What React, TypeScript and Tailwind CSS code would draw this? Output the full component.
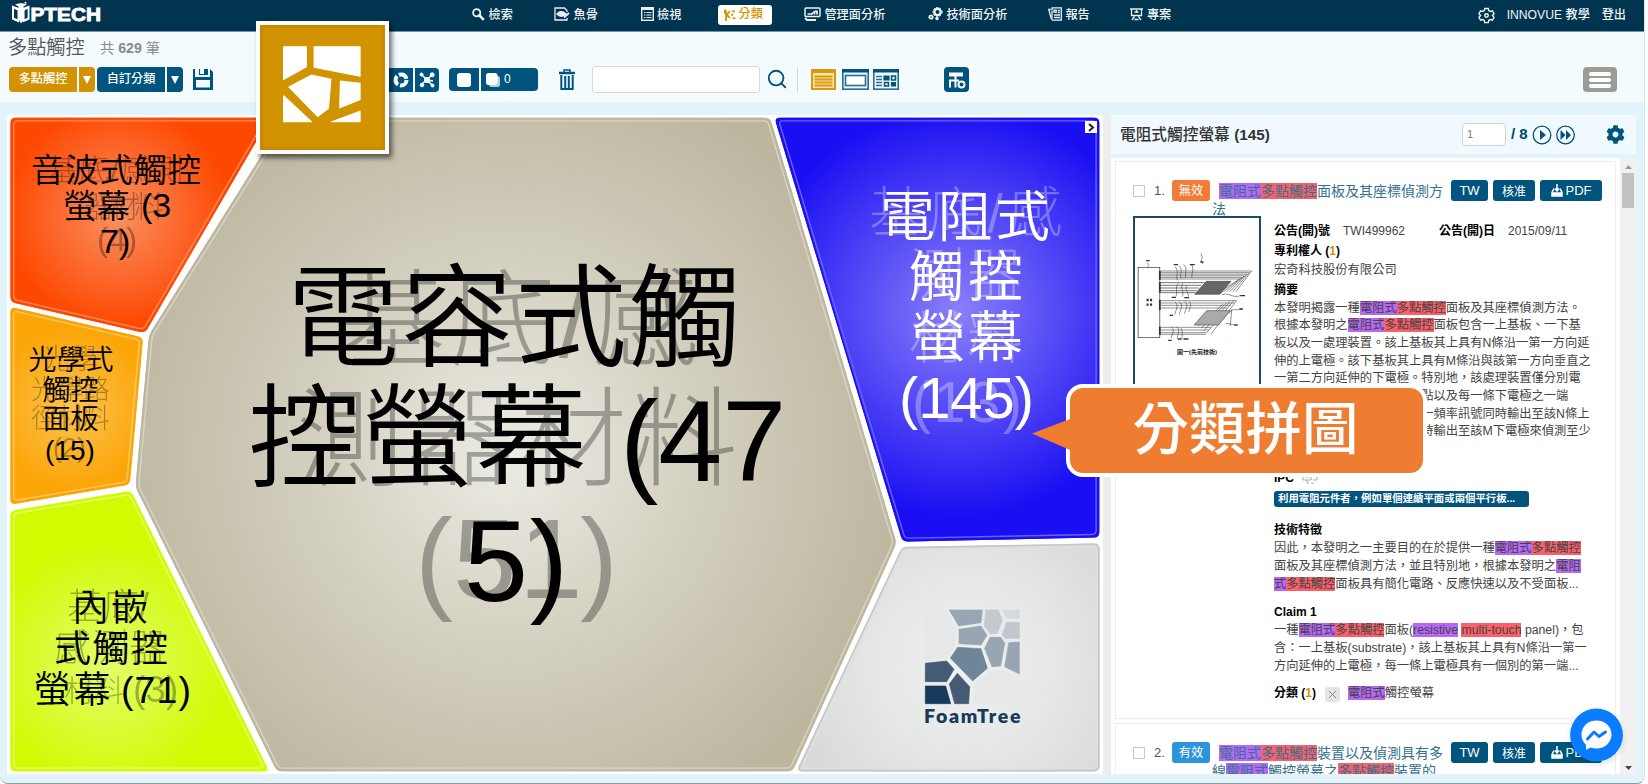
import React from "react";
import { FaCog } from "react-icons/fa";
import { LuSearch } from "react-icons/lu";

type Pt = [number, number];

const FONT = "font-['Liberation_Sans','Noto_Sans_CJK_TC',sans-serif]";

/* ---------- geometry helpers ---------- */

function rounded(pts: Pt[], r: number): string {
  const n = pts.length;
  let d = "";
  pts.forEach((p, i) => {
    const a = pts[(i + n - 1) % n];
    const b = pts[(i + 1) % n];
    const la = Math.hypot(a[0] - p[0], a[1] - p[1]);
    const lb = Math.hypot(b[0] - p[0], b[1] - p[1]);
    const s = [p[0] + ((a[0] - p[0]) * r) / la, p[1] + ((a[1] - p[1]) * r) / la];
    const e = [p[0] + ((b[0] - p[0]) * r) / lb, p[1] + ((b[1] - p[1]) * r) / lb];
    d += `${i ? "L" : "M"}${s[0]} ${s[1]}Q${p[0]} ${p[1]} ${e[0]} ${e[1]}`;
  });
  return d + "Z";
}

function inset(pts: Pt[], k: number): Pt[] {
  const n = pts.length;
  const lines = pts.map((p, i) => {
    const q = pts[(i + 1) % n];
    const l = Math.hypot(q[0] - p[0], q[1] - p[1]);
    const dx = (q[0] - p[0]) / l;
    const dy = (q[1] - p[1]) / l;
    return { x: p[0] - dy * k, y: p[1] + dx * k, dx, dy };
  });
  return lines.map((b, i) => {
    const a = lines[(i + n - 1) % n];
    const det = a.dx * b.dy - a.dy * b.dx;
    const t = ((b.x - a.x) * b.dy - (b.y - a.y) * b.dx) / det;
    return [a.x + a.dx * t, a.y + a.dy * t] as Pt;
  });
}

/* ---------- foam tree ---------- */

interface Cell {
  id: string;
  pts: Pt[];
  c: Pt;
  r: number;
  inner: string;
  mid: string;
  outer: string;
  line: string;
}

const cells: Cell[] = [
  { id: "red", pts: [[10.5, 117.7], [270, 117.7], [145, 333], [10.5, 302]], c: [118, 215], r: 112, inner: "#fb905f", mid: "#fc6c33", outer: "#fd4800", line: "#ff8a5c" },
  { id: "amber", pts: [[10.5, 307], [143, 337.5], [129.7, 484.5], [10.5, 504.5]], c: [72, 408], r: 82, inner: "#fdc34d", mid: "#fcb42b", outer: "#fba506", line: "#ffc862" },
  { id: "lime", pts: [[10.5, 511], [131, 491], [269, 771.3], [10.5, 771.3]], c: [108, 665], r: 125, inner: "#e3fd6a", mid: "#dafc38", outer: "#d0fb00", line: "#e6ff70" },
  { id: "sand", pts: [[285, 117.7], [770, 117.7], [896.5, 543], [792.5, 771.3], [277, 771.3], [135.5, 487], [149, 335]], c: [507, 455], r: 400, inner: "#ecebe4", mid: "#d3cfbf", outer: "#bdb69f", line: "#d8d4c4" },
  { id: "blue", pts: [[774.5, 117.7], [1099.3, 117.7], [1099.3, 537.5], [902.5, 541.5]], c: [958, 312], r: 205, inner: "#8a80fa", mid: "#5348f5", outer: "#190ff2", line: "#6a62f8" },
  { id: "mist", pts: [[902, 547], [1099.5, 543.5], [1099.5, 771.3], [796.5, 771.3]], c: [965, 665], r: 175, inner: "#eff1f1", mid: "#e6e8e8", outer: "#d8dada", line: "#dfe1e1" },
];

type Label = [string, number, number, number, number?];

const ghosts: Label[] = [
  ["基底/感測", 47, 180, 30, 136],
  ["器材料", 84, 217, 30, 80],
  ["(4)", 97, 251, 33],
  ["光學", 42, 369, 28],
  ["光學路", 31, 399, 27, 79],
  ["徑材料", 31, 428, 27, 79],
  ["(2)", 53, 457, 27],
  ["基底/", 67, 619, 36],
  ["感測器", 54, 661, 37, 112],
  ["材料", 64, 701, 30],
  ["(3)", 133, 702, 37],
  ["基底/感", 340, 357, 106, 358],
  ["測器材料", 296, 477, 108, 442],
  ["(5", 415, 598, 114],
  ["1", 519, 598, 114],
  [")", 580, 598, 114],
];

const blueGhosts: Label[] = [
  ["基底/感", 869, 232, 54, 193],
  ["測器", 909, 294, 56, 114],
  ["材料", 909, 358, 56, 114],
  ["(13)", 912, 422, 57, 110],
];

const labels: Label[] = [
  ["音波式觸控", 31, 182, 33.5, 170],
  ["螢幕", 63, 218, 33.5, 67],
  ["(3", 141, 217, 34],
  ["7)", 100, 253, 34],
  ["光學式", 28.5, 369.5, 28, 85],
  ["觸控", 42.5, 400, 28],
  ["面板", 42.5, 429, 28],
  ["(15)", 45, 459.5, 28],
  ["內嵌", 72, 620.5, 37, 76],
  ["式觸控", 54, 662, 37, 114],
  ["螢幕", 33.5, 702.5, 37, 77],
  ["(71)", 121, 703, 37.5, 70],
  ["電容式觸", 287, 358, 112, 454],
  ["控螢幕", 248, 477.5, 112, 339],
  ["(47", 620, 480.5, 115],
  ["5)", 464, 601, 115, 104],
];

const blueLabels: Label[] = [
  ["電阻式", 880, 236, 55, 170],
  ["觸控", 909, 296, 55, 114],
  ["螢幕", 911, 356, 55, 112],
  ["(145)", 899, 417.5, 58, 135],
];

function Labels({ items, fill, opacity = 1 }: { items: Label[]; fill: string; opacity?: number }) {
  return (
    <g fill={fill} opacity={opacity}>
      {items.map(([t, x, y, s, len], i) => (
        <text key={i} x={x} y={y} fontSize={s} textLength={len} lengthAdjust="spacing">
          {t}
        </text>
      ))}
    </g>
  );
}

function FoamTreeLogo() {
  const tiles: [string, string][] = [
    ["#e6e8e9", "450,330 498,330 525,385 525,440 500,475 436,482 436,345"],
    ["#98a5b3", "508,330 607,330 603,368 536,378"],
    ["#c3c9cf", "617,330 655,330 667,360 652,400 632,402 613,378"],
    ["#d6dadc", "667,330 718,330 718,355 680,355"],
    ["#c0c7ce", "680,367 718,367 718,415 675,415 666,405"],
    ["#98a5b3", "537,388 603,378 621,406 603,435 537,431"],
    ["#98a5b3", "630,412 662,412 674,430 662,498 636,500 614,445"],
    ["#98a5b3", "686,428 718,426 718,522 674,500"],
    ["#6f8598", "533,442 603,446 622,505 578,543 511,474"],
    ["#455a75", "436,490 500,483 522,508 500,545 436,545"],
    ["#455a75", "532,520 569,560 566,611 524,611 508,552"],
    ["#17395a", "436,558 497,558 512,611 436,611"],
    ["#e6e8e9", "585,545 635,512 670,514 718,537 718,598 705,611 579,611"],
  ];
  return (
    <g transform="translate(780 500) scale(0.33333)">
      {tiles.map(([f, p], i) => (
        <polygon key={i} points={p} fill={f} stroke={f} strokeWidth="2" strokeLinejoin="round" />
      ))}
    </g>
  );
}

function FoamTree() {
  return (
    <svg viewBox="7 115 1096 659" className="block h-full w-full">
      <defs>
        {cells.map((c) => (
          <radialGradient key={c.id} id={c.id} gradientUnits="userSpaceOnUse" cx={c.c[0]} cy={c.c[1]} r={c.r}>
            <stop offset="0" stopColor={c.inner} />
            <stop offset="0.5" stopColor={c.mid} />
            <stop offset="1" stopColor={c.outer} />
          </radialGradient>
        ))}
      </defs>
      {cells.map((c) => (
        <g key={c.id}>
          <path d={rounded(c.pts, 5)} fill={`url(#${c.id})`} />
          <path d={rounded(inset(c.pts, 0.7), 5)} fill="none" stroke={c.outer} strokeWidth="1.4" />
          <path d={rounded(inset(c.pts, 3.2), 4)} fill="none" stroke={c.line} strokeWidth="1.4" />
          {c.id === "mist" && <path d={rounded(inset(c.pts, 0.7), 5)} fill="none" stroke="#c6c8c8" strokeWidth="1.6" />}
        </g>
      ))}
      <g fontWeight="300">
        <Labels items={ghosts} fill="#000" opacity={0.3} />
        <Labels items={blueGhosts} fill="#fff" opacity={0.3} />
      </g>
      <g fontWeight="350">
        <Labels items={labels} fill="#000" />
        <Labels items={blueLabels} fill="#fff" />
      </g>
      <FoamTreeLogo />
      <text x="924" y="722.5" textLength="96.5" fontSize="19.5" fontWeight="800" fill="#17395a" fontFamily="Lato">
        FoamTree
      </text>
    </svg>
  );
}

/* ---------- header ---------- */

function Logo() {
  return (
    <svg width="92" height="24" viewBox="11 1 92 24">
      <path d="M12 5.500l7 2.500v14.500l-7-3z" fill="#fff" />
      <path d="M14 9l3.500 1.200v9l-3.500-1.500z" fill="#01344e" />
      <path d="M29.500 5.500l-7 2.500v14.500l7-3z" fill="#fff" />
      <path d="M27.600 9l-3 1.200v9l3-1.500z" fill="#01344e" />
      <path d="M15 4.500l4.500-1.300h3l4.500 1.300-3.500 2v13l-2.500 4-2.500-4v-13z" fill="#fff" />
      <circle cx="25.500" cy="2.700" r="1" fill="#fff" />
      <text x="30.500" y="21" fontSize="18.500" fontWeight="bold" fill="#fff" stroke="#fff" strokeWidth=".9" textLength="70.500" lengthAdjust="spacingAndGlyphs">
        PTECH
      </text>
    </svg>
  );
}

const KeySearchIcon = () => (
  <svg width="13" height="13" viewBox="0 0 13 13" fill="none" stroke="#f0f4f7">
    <circle cx="4.700" cy="4.700" r="3.600" strokeWidth="1.800" />
    <path d="M7.500 7.500l4.300 4.300" strokeWidth="2.600" />
  </svg>
);
const FishIcon = () => (
  <svg width="16" height="14" viewBox="0 0 16 14" fill="none" stroke="#e9f0f4" strokeWidth="1.300">
    <path d="M13 5V3.500L10.500 1H1v12h12v-2" />
    <path d="M3 7c2.500-3 6-3 9 0-3 3-6.500 3-9 0z" fill="#e9f0f4" />
    <path d="M10 10.500l5-4.500" strokeWidth="1.800" />
  </svg>
);
const ListIcon = () => (
  <svg width="13" height="14" viewBox="0 0 13 14" fill="none" stroke="#e9f0f4" strokeWidth="1.400">
    <rect x=".7" y=".7" width="11.600" height="12.600" />
    <path d="M1 2h11" strokeWidth="2" />
    <path d="M3 5.500h1.500M5.500 5.500h5M3 8h1.500M5.500 8h5M3 10.500h1.500M5.500 10.500h5" strokeWidth="1.200" />
  </svg>
);
const SortIcon = () => (
  <svg width="12" height="12" viewBox="0 0 12 12" fill="#d39200">
    <path d="M0 1l2-1 1 4L5.500 1.500 6.500 3 4 5.500l2.500 3-1 1.200L3 7.500V12H1.200V4.500H0z" />
    <rect x="8" y="1.500" width="3" height="1.600" />
    <rect x="7" y="4.800" width="2.200" height="1.800" />
    <rect x="8.500" y="8.500" width="3" height="1.600" />
  </svg>
);
const MonitorIcon = () => (
  <svg width="17" height="14" viewBox="0 0 17 14" fill="none" stroke="#e9f0f4" strokeWidth="1.500">
    <rect x="1" y="1" width="15" height="8.500" rx="1" />
    <path d="M3.500 7h4l3-2.500 3-.5" />
    <path d="M8 7.500V6M10.500 7.500V5M13 7.500V4" strokeWidth="1.800" />
    <path d="M1 11l2 2h9" strokeWidth="1.800" />
  </svg>
);
const GearsIcon = () => (
  <svg width="15" height="14" viewBox="0 0 15 14" fill="none" stroke="#f0f4f7">
    <circle cx="9.500" cy="5" r="3.200" strokeWidth="2.400" />
    <circle cx="9.500" cy="5" r="4.600" strokeWidth="1" strokeDasharray="1.800 1.500" />
    <circle cx="3" cy="10" r="1.700" strokeWidth="1.800" />
    <circle cx="9" cy="11.500" r="1" strokeWidth="1.600" />
  </svg>
);
const ReportIcon = () => (
  <svg width="14" height="14" viewBox="0 0 14 14" fill="none" stroke="#e9f0f4" strokeWidth="1.300">
    <path d="M4 3.500V.8h9.300v12.400H4.500L3 11 .8 2.500h2" />
    <path d="M4 4v7.500" />
    <rect x="6" y="3.200" width="2.200" height="2" />
    <path d="M9.800 3.500h2M9.800 5.500h2M6 8h6M6 10.500h6" />
  </svg>
);
const CaseIcon = () => (
  <svg width="13" height="13" viewBox="0 0 13 13" fill="none" stroke="#e9f0f4" strokeWidth="1.300">
    <path d="M0 1h13M1.500 1.500v6h10v-6M1.500 7.500h10M6.500 2v3M4.500 4h4M2 12l2.500-3.500M11 12L8.500 8.500M4.500 11.500h4" />
  </svg>
);

function NavItem({ w, icon, text, active }: { w: string; icon: React.ReactNode; text: string; active?: boolean }) {
  return (
    <div className={`${w} flex shrink-0 items-center`}>
      {active ? (
        <div className="flex h-5 w-[54px] items-center gap-[3px] rounded-[3px] bg-white pl-1.5 text-[#d39200]">
          {icon}
          <span className="whitespace-nowrap">{text}</span>
        </div>
      ) : (
        <div className="flex items-center gap-[3.500px]">
          {icon}
          <span className="pt-0.5 whitespace-nowrap">{text}</span>
        </div>
      )}
    </div>
  );
}

function Header() {
  return (
    <header className="flex h-8 items-center border-b border-[#6f96a8] bg-[#01344e] text-[12.200px] font-medium text-[#f0f4f7]">
      <div className="w-[472px] shrink-0 pb-1.5 pl-[11px]">
        <Logo />
      </div>
      <nav className="flex h-full flex-1 items-center pb-0.5">
        <NavItem w="w-[82px]" icon={<KeySearchIcon />} text="檢索" />
        <NavItem w="w-[86.600px]" icon={<FishIcon />} text="魚骨" />
        <NavItem w="w-[77px]" icon={<ListIcon />} text="檢視" />
        <NavItem w="w-[86.300px]" icon={<SortIcon />} text="分類" active />
        <NavItem w="w-[124px]" icon={<MonitorIcon />} text="管理面分析" />
        <NavItem w="w-[120px]" icon={<GearsIcon />} text="技術面分析" />
        <NavItem w="w-[82.500px]" icon={<ReportIcon />} text="報告" />
        <NavItem w="w-[60px]" icon={<CaseIcon />} text="專案" />
      </nav>
      <div className="flex items-center pr-[18px]">
        <svg width="17" height="17" viewBox="0 0 24 24" fill="none" stroke="#f0f4f7" strokeWidth="2">
          <path d="M9.500 2h5l.6 3 2.300 1.300 2.900-1 2.400 4.200L20.400 12l2.300 2.500-2.400 4.200-2.900-1-2.300 1.300-.6 3h-5l-.6-3-2.300-1.300-2.900 1-2.400-4.200L3.600 12 1.300 9.500l2.400-4.200 2.900 1L8.900 5z" />
          <circle cx="12" cy="12" r="2.500" />
        </svg>
        <span className="ml-3 w-[95px] whitespace-nowrap">INNOVUE 教學</span>
        <span>登出</span>
      </div>
    </header>
  );
}

/* ---------- toolbar ---------- */

function SplitButton({ text, gold }: { text: string; gold?: boolean }) {
  const bg = gold ? "bg-[#d39200]" : "bg-[#00547d]";
  return (
    <div className="flex h-[25px] gap-0.5 text-[12.200px] font-medium text-white">
      <div className={`${bg} flex w-[68px] shrink-0 items-center justify-center rounded-l`}>{text}</div>
      <div className={`${bg} flex w-4 shrink-0 items-center justify-center rounded-r`}>
        <svg width="8" height="8" viewBox="0 0 8 8">
          <path d="M0 0h8L4 8z" fill="#fff" />
        </svg>
      </div>
    </div>
  );
}

function Toolbar() {
  return (
    <div className="flex h-[25px] items-center">
      <div className="w-[95px] shrink-0 pl-[9px]">
        <SplitButton text="多點觸控" gold />
      </div>
      <div className="ml-[2px] w-[86px] shrink-0">
        <SplitButton text="自訂分類" />
      </div>
      <svg className="ml-[10px] shrink-0" width="20" height="21" viewBox="0 0 20 21">
        <path d="M0 0h2v8h15V0l3 3v18H0z" fill="#00547d" />
        <rect x="6" y="0" width="9" height="6" fill="#00547d" />
        <rect x="7" y="0" width="4" height="5" fill="#f3fbff" />
        <rect x="3" y="11" width="14" height="7.500" fill="#f3fbff" />
      </svg>
      <div className="ml-[173px] flex shrink-0 gap-0.5 text-white">
        <div className="flex h-6 w-[27px] items-center justify-end bg-[#00547d] pr-1">
          <svg width="16" height="16" viewBox="0 0 16 16">
            <circle cx="8" cy="8" r="5.500" fill="none" stroke="#fff" strokeWidth="4" strokeDasharray="9.500 2" />
          </svg>
        </div>
        <div className="flex h-6 w-6 items-center justify-center rounded-r bg-[#00547d]">
          <svg width="16" height="16" viewBox="0 0 16 16" fill="#fff" stroke="#fff">
            <path d="M2.500 2.500l11 11M13 3L3 12M8 8l6 1" strokeWidth="1.600" />
            <circle cx="8" cy="8" r="2.600" />
            <circle cx="2.500" cy="2.500" r="1.500" />
            <circle cx="13.200" cy="2.800" r="2" />
            <circle cx="3" cy="13" r="1.800" />
            <circle cx="13.500" cy="13.500" r="1.500" />
          </svg>
        </div>
      </div>
      <div className="ml-[10px] flex shrink-0 gap-0.5 text-white">
        <div className="flex h-[23px] w-[30px] items-center justify-center rounded-l-sm bg-[#00547d]">
          <div className="h-[14px] w-[14px] rounded-[3px] bg-white" />
        </div>
        <div className="flex h-[23px] w-[57px] items-center rounded-r-sm bg-[#00547d] pl-1">
          <svg width="16" height="16" viewBox="0 0 16 16">
            <rect x="4" y="4" width="11" height="11" rx="2.500" fill="#b9cfdb" />
            <rect x="1" y="1" width="11.500" height="12" rx="2.500" fill="#fff" />
          </svg>
          <span className="ml-[3px] pb-0.5 text-xs">0</span>
        </div>
      </div>
      <svg className="ml-[21px] shrink-0" width="16" height="21" viewBox="0 0 16 21" fill="none" stroke="#00547d">
        <path d="M0 4h16" strokeWidth="2.500" />
        <path d="M5 3V1h6v2" strokeWidth="1.500" />
        <path d="M2.300 6v14h11.400V6M6.200 7v12M9.800 7v12" strokeWidth="2" />
      </svg>
      <div className="ml-[17px] h-[27px] w-[168px] shrink-0 rounded-[3px] border border-[#d6dadc] bg-white" />
      <LuSearch className="ml-[5px] shrink-0 pb-0.5 text-[#00547d]" size={24} strokeWidth={2} />
      <div className="ml-[8px] h-[26px] w-px shrink-0 bg-[#d5dadd]" />
      <svg className="ml-[13px] shrink-0" width="25" height="21" viewBox="0 0 25 21">
        <rect x="1" y="1" width="23" height="19" fill="#f7e3b3" stroke="#d99a0c" strokeWidth="2" />
        <rect x="0" y="0" width="25" height="4" fill="#d99a0c" />
        <path d="M3.500 7.500h18M3.500 10.500h18M3.500 13.500h18M3.500 16.500h18" stroke="#d99a0c" strokeWidth="1.800" />
      </svg>
      <svg className="ml-[6px] shrink-0" width="27" height="21" viewBox="0 0 27 21">
        <rect x=".8" y=".8" width="25.400" height="19.400" fill="#e9f5fa" stroke="#2a6d90" strokeWidth="1.600" />
        <rect x="0" y="0" width="27" height="3.500" fill="#00547d" />
        <rect x="3.500" y="6.500" width="20" height="10" fill="#fff" stroke="#2a6d90" strokeWidth="1.600" />
      </svg>
      <svg className="ml-[4px] shrink-0" width="26" height="21" viewBox="0 0 26 21">
        <rect x=".8" y=".8" width="24.400" height="19.400" fill="#f3fbff" stroke="#2a6d90" strokeWidth="1.600" />
        <rect x="0" y="0" width="26" height="3.500" fill="#00547d" />
        <path d="M3 7.500h6M3 10.500h6M3 13.500h6M3 16.500h6" stroke="#2a6d90" strokeWidth="1.300" />
        <path d="M11 7h5v4h-5zM18.500 13.500h4v3.500h-4z" fill="#00547d" stroke="#00547d" strokeWidth="1.200" />
        <path d="M18.500 7h4v4h-4zM11.500 13.500h4v3.500h-4z" fill="#d4e6ef" stroke="#00547d" strokeWidth="1.500" />
      </svg>
      <svg className="ml-[45px] shrink-0" width="25" height="25" viewBox="0 0 25 25">
        <rect width="25" height="25" rx="4" fill="#00547d" />
        <path d="M5 5.500h14v4H5z" fill="#fff" />
        <path d="M11.500 9v4M5 13.500h10M6 13v7.500M11.500 13v7.500" fill="none" stroke="#fff" strokeWidth="2" />
        <circle cx="17.500" cy="17.500" r="3" fill="none" stroke="#fff" strokeWidth="2" />
      </svg>
      <div className="mr-[27px] ml-auto flex h-[25px] w-[34px] shrink-0 flex-col items-center justify-center gap-[2px] rounded bg-[#9b9c96]">
        <div className="h-1 w-[22px] rounded-full bg-white" />
        <div className="h-1 w-[22px] rounded-full bg-white" />
        <div className="h-1 w-[22px] rounded-full bg-white" />
      </div>
    </div>
  );
}

/* ---------- result list ---------- */

const V = ({ children }: { children: React.ReactNode }) => <mark className="bg-[#b768f8] text-inherit">{children}</mark>;
const R = ({ children }: { children: React.ReactNode }) => <mark className="bg-[#fb5f6a] text-inherit">{children}</mark>;
const H = () => (
  <>
    <V>電阻式</V>
    <R>多點觸控</R>
  </>
);

const PdfIcon = () => (
  <svg width="12" height="13" viewBox="0 0 12 13" fill="none" stroke="#fff" strokeWidth="1.500">
    <path d="M3 4.500L1 8.500V12h10V8.500L9 4.500" />
    <path d="M6 0v6M4 4.500L6 7l2-2.500" />
    <path d="M1 10h10" strokeWidth="3.500" />
  </svg>
);

function RowHead({ no, tag, tagBg, line1, line2 }: { no: string; tag: string; tagBg: string; line1: React.ReactNode; line2: React.ReactNode }) {
  return (
    <div>
      <div className="flex h-[21px] items-center">
        <div className="ml-[17px] h-3 w-3 shrink-0 border border-[#c5c9cb] bg-white" />
        <span className="ml-[9px] w-[18px] shrink-0 text-[13px] text-[#555]">{no}</span>
        <span className={`${tagBg} flex h-[21px] w-[38px] shrink-0 items-center justify-center rounded-[3px] pt-0.5 text-[12.200px] text-white`}>{tag}</span>
        <span className="ml-[9px] w-[232px] shrink-0 pt-0.5 text-[14px] leading-[15px] whitespace-nowrap text-[#35718f]">{line1}</span>
        <span className="flex h-[21px] w-[37px] shrink-0 items-center justify-center rounded-[3px] bg-[#00547d] text-[13px] text-white">TW</span>
        <span className="ml-[5px] flex h-[21px] w-[42px] shrink-0 items-center justify-center rounded-[3px] bg-[#00547d] pt-0.5 text-xs text-white">核准</span>
        <span className="ml-[5px] flex h-[21px] w-[62px] shrink-0 items-center justify-center gap-[3px] rounded-[3px] bg-[#00547d] text-[13px] text-white">
          <PdfIcon />
          PDF
        </span>
      </div>
      <div className="h-[14px] pt-[1px] pl-[96px] text-[14px] leading-[15px] whitespace-nowrap text-[#35718f]">{line2}</div>
    </div>
  );
}

function Bundle({ y, h, x2, n }: { y: number; h: number; x2: number; n: number }) {
  return (
    <>
      {Array.from({ length: n }, (_, i) => (
        <path key={i} d={`M172 ${y + (h * i) / (n - 1)}H${x2 - i * 7}L${x2 - 45 - i * 9} ${y + 62}`} />
      ))}
    </>
  );
}

function Figure() {
  return (
    <div className="mt-px h-[261px] w-32 shrink-0 border-2 border-[#1d4a60] bg-white">
      <svg width="124" height="150" viewBox="101 324 355 450" preserveAspectRatio="none" fill="none" stroke="#333" strokeWidth="1.600">
        <rect x="110" y="472" width="62" height="211" strokeWidth="2" />
        <Bundle y={483} h={24} x2={435} n={6} />
        <path d="M172 518H300M172 526H290M172 534H284M172 542H278M172 548H274" strokeWidth="2" />
        <path d="M305 514H376L344 553H272z" fill="#666" stroke="#333" />
        <path d="M172 572H392M172 579H385M172 586H376M172 594H366M392 572L318 673M384 572L308 666M374 574L298 662M364 578L290 655M354 582L282 648" />
        <path d="M306 602H374L340 645H270z" fill="#aaa" />
        <path d="M172 652H318M172 660H312M172 668H308M172 673H304" />
        <path d="M172 483V510M172 516V548M172 570V600M172 650V674" strokeWidth="5" />
        <path d="M215 470c15 10 0 34 8 40M226 466c15 10 0 34 8 40M240 464c15 10 0 34 8 40M262 464c10 10 0 24 2 40M226 520c-12 10-2 26-8 40M238 520c-10 14 6 24-2 40M250 528c-10 10 6 20 4 32M215 576c15 10 0 28 0 38M228 576c15 10 0 28 0 38M243 574c15 10 0 28 0 38M256 574c9 10 0 20 0 32M205 650c12 10 2 22 0 34M220 650c12 10 2 22 2 38M232 654c8 10 2 22 4 34" />
        <path d="M290 430l4 14-4 6 5 12M136 458l4 8-3 6M350 554c20-8 30 12 52 3M370 610c14-20 22-5 34-14M360 640l24 4M378 598l-4 50" />
        <path d="M134 570h6M144 570h6M134 584h6M144 584h6" strokeWidth="7" />
        <path d="M133 452h10M212 464h12M258 464h14M288 456h9M206 562h12M242 563h14M402 557h14M200 616h10M400 597h10M385 645h10M196 691h10M224 687h10M240 687h14" strokeWidth="4" />
      </svg>
      <div className="-mt-[20px] text-center text-[6px] leading-[8px] font-bold text-[#222]">圖一(先前技術)</div>
    </div>
  );
}

function Card1() {
  return (
    <article className="h-[558px] shrink-0 overflow-hidden border border-[#ededed] bg-white pt-[18px]">
      <RowHead
        no="1."
        tag="無效"
        tagBg="bg-[#f47b35]"
        line1={
          <>
            <H />
            面板及其座標偵測方
          </>
        }
        line2="法"
      />
      <div className="flex pl-[17px]">
        <Figure />
        <div className="ml-[13px] pt-[2.500px] text-[12.280px] leading-[17.700px] whitespace-nowrap text-[#444]">
          <div className="mt-[5px] flex h-[18px] text-[12px]">
            <b className="w-[69px] text-black">公告(開)號</b>
            <span className="w-[96px]">TWI499962</span>
            <b className="w-[69px] text-black">公告(開)日</b>
            <span>2015/09/11</span>
          </div>
          <div className="mt-[2px] h-[18px] text-[12px] font-bold text-black">
            專利權人 (<span className="text-[#d39200]">1</span>)
          </div>
          <div className="mt-[1.500px] h-[18px]">宏奇科技股份有限公司</div>
          <div className="mt-[1.500px] h-[18px] text-[12px] font-bold text-black">摘要</div>
          <div>
            本發明揭露一種
            <H />
            面板及其座標偵測方法。
          </div>
          <div>
            根據本發明之
            <H />
            面板包含一上基板、一下基
          </div>
          <div>板以及一處理裝置。該上基板其上具有N條沿一第一方向延</div>
          <div>伸的上電極。該下基板其上具有M條沿與該第一方向垂直之</div>
          <div>一第二方向延伸的下電極。特別地，該處理裝置僅分別電</div>
          <div>性連接每一條上電極之一端點以及每一條下電極之一端</div>
          <div>點。該處理裝置可以產生第一頻率訊號同時輸出至該N條上</div>
          <div>電極，並且將相反訊號再同時輸出至該M下電極來偵測至少</div>
          <div className="mt-[28px] flex h-[18px] items-center gap-2 text-xs font-bold text-black">
            IPC
            <svg width="16" height="14" viewBox="0 0 16 14" fill="none" stroke="#aaa">
              <path d="M1 1h8v8H1zM3 4h4M3 6h4M11 2h4v7h-4M5 9v3h2M9 12h3" />
            </svg>
          </div>
          <div className="mt-[4px] flex h-4 w-[255px] items-center overflow-hidden rounded-[3px] bg-[#00547d] pl-1 text-[10.400px] font-bold text-white">
            利用電阻元件者，例如單個連續平面或兩個平行板...
          </div>
          <div className="mt-[15px] h-[18px] text-[12px] font-bold text-black">技術特徵</div>
          <div>
            因此，本發明之一主要目的在於提供一種
            <H />
          </div>
          <div>
            面板及其座標偵測方法，並且特別地，根據本發明之<V>電阻</V>
          </div>
          <div>
            <V>式</V>
            <R>多點觸控</R>
            面板具有簡化電路、反應快速以及不受面板...
          </div>
          <div className="mt-[11px] h-[18px] text-[12px] font-bold text-black">Claim 1</div>
          <div>
            一種
            <H />
            面板(<V>resistive</V> <R>multi-touch</R> panel)，包
          </div>
          <div>含：一上基板(substrate)，該上基板其上具有N條沿一第一</div>
          <div>方向延伸的上電極，每一條上電極具有一個別的第一端...</div>
          <div className="mt-[10px] flex h-[18px] items-center">
            <b className="text-[12px] text-black">
              分類 (<span className="text-[#d39200]">1</span>)
            </b>
            <span className="mr-2 ml-[9px] flex h-[15px] w-[15px] items-center justify-center rounded-[3px] bg-[#e4e4e4]">
              <svg width="9" height="9" viewBox="0 0 9 9" stroke="#888">
                <path d="M1 1l7 7M8 1L1 8" />
              </svg>
            </span>
            <span>
              <V>電阻式</V>觸控螢幕
            </span>
          </div>
        </div>
      </div>
    </article>
  );
}

function ResultPanel() {
  return (
    <section className="flex w-[525px] shrink-0 flex-col">
      <div className="flex h-[39px] shrink-0 items-center bg-[#f0fafe]">
        <h2 className="ml-[9px] w-[342px] text-[15.700px] font-medium text-[#333]">
          電阻式觸控螢幕 <b className="text-[15.300px]">(145)</b>
        </h2>
        <div className="flex h-[23px] w-[44px] items-center rounded-sm border border-[#d0d4d6] bg-white pl-1 text-[11px] text-[#777]">1</div>
        <b className="ml-[5px] w-[21px] text-[15px] whitespace-nowrap text-[#00456a]">/ 8</b>
        <svg width="44" height="20" viewBox="0 0 44 20">
          <circle cx="10" cy="10" r="8.800" fill="#f5fcff" stroke="#00547d" strokeWidth="1.300" />
          <path d="M8 5l6 5-6 5z" fill="#00547d" />
          <circle cx="33.500" cy="10" r="8.800" fill="#f5fcff" stroke="#00547d" strokeWidth="1.300" />
          <path d="M28.500 5l5 5-5 5zM34 5l5 5-5 5z" fill="#00547d" />
        </svg>
        <FaCog className="ml-[30px] text-[#00547d]" size={19} />
      </div>
      <div className="mt-[4px] flex h-[616px] overflow-hidden bg-white">
        <div className="flex w-[505px] shrink-0 flex-col gap-1 pt-[3px] pl-[4px]">
          <Card1 />
          <article className="h-[80px] shrink-0 border border-[#ededed] bg-white pt-[18px]">
            <RowHead
              no="2."
              tag="有效"
              tagBg="bg-[#2d94dc]"
              line1={
                <>
                  <H />
                  裝置以及偵測具有多
                </>
              }
              line2={
                <>
                  線<V>電阻式</V>觸控螢幕之<R>多點觸控</R>裝置的
                </>
              }
            />
          </article>
        </div>
        <div className="ml-auto flex w-4 flex-col items-center bg-[#f1f1f1] pt-[7px] pb-1">
          <svg width="7" height="4" viewBox="0 0 7 4">
            <path d="M0 4h7L3.500 0z" fill="#999" />
          </svg>
          <div className="mt-1 h-[35px] w-3 bg-[#c1c1c1]" />
          <svg className="mt-auto" width="7" height="4" viewBox="0 0 7 4">
            <path d="M0 0h7L3.500 4z" fill="#444" />
          </svg>
        </div>
      </div>
    </section>
  );
}

/* ---------- overlays ---------- */

function BigTile() {
  return (
    <div className="absolute top-[21px] left-[256px] h-[133px] w-[133px] border-4 border-white bg-[#d19300] shadow-[3px_4px_5px_rgba(0,0,0,0.55)]">
      <svg className="h-full w-full" viewBox="741 75 356 373" preserveAspectRatio="none">
        <rect x="745" y="79" width="348" height="365" fill="none" stroke="#c98900" strokeWidth="10" />
        <g fill="#fff" stroke="#fff" strokeWidth="3" strokeLinejoin="round" className="blur-[2px]">
          <path d="M808 140H873V200L808 238zM895 140H1026V228L895 201zM823 260L888 224 943 237 936 324 905 348zM970 242L1026 249V298L968 322zM808 286L888 364H808zM944 364L1026 332V364z" />
        </g>
      </svg>
    </div>
  );
}

function Callout() {
  return (
    <div className="absolute top-[384px] left-[1066px] flex h-[93px] w-[361px] items-center justify-center rounded-[17px] border-4 border-white bg-[#ee7d31]">
      <svg className="absolute top-[31px] -left-[38px]" width="40" height="31" viewBox="0 0 40 31">
        <path d="M0 14.500L38 0h2v31h-2z" fill="#ee7d31" />
      </svg>
      <span className="pr-0.5 text-[56.500px] leading-none font-medium whitespace-nowrap text-white">分類拼圖</span>
    </div>
  );
}

export default function App() {
  return (
    <div className={`${FONT} relative h-[784px] w-[1648px] overflow-hidden bg-white`}>
      <div className="flex h-[784px] w-[1645px] flex-col overflow-hidden rounded-b-lg border-r border-b border-r-[#d5e5ec] border-b-[#8f9ca2] bg-[#e2f4fa]">
        <Header />
        <div className="h-[70px] shrink-0 border-t border-white bg-[#f3fbff]">
          <div className="flex h-[34px] items-center pt-[1px] pb-[6px] pl-[8px]">
            <span className="w-[92px] text-[19.200px] leading-none font-[350] text-[#555]">多點觸控</span>
            <span className="pt-0.5 text-[14.200px] leading-none text-[#8a8a8a]">
              共 <b>629</b> 筆
            </span>
          </div>
          <Toolbar />
        </div>
        <div className="mt-[13px] flex h-[659px] pl-[7px]">
          <div className="h-[659px] w-[1096px] shrink-0 bg-white">
            <FoamTree />
          </div>
          <div className="h-full w-[8px] shrink-0 bg-[#ededed]" />
          <ResultPanel />
        </div>
      </div>
      <div className="absolute top-[121px] left-[1085px] flex h-3 w-3 items-center justify-center bg-white">
        <svg width="8" height="9" viewBox="0 0 8 9" fill="none" stroke="#222" strokeWidth="2">
          <path d="M2 1l4 3.500L2 8" />
        </svg>
      </div>
      <BigTile />
      <Callout />
      <svg className="absolute top-[706px] left-[1567px] drop-shadow-md" width="59" height="59" viewBox="0 0 59 59">
        <circle cx="29.500" cy="29" r="26.400" fill="#0a7cff" />
        <path d="M29.500 14.500c-8.600 0-15 6.200-15 14 0 4.200 1.700 7.700 4.500 10.200v5l4.700-2.300c1.800.6 3.700 1 5.800 1 8.600 0 15-6.200 15-14s-6.400-13.900-15-13.900z" fill="#fff" />
        <path d="M20.500 33l6.500-7 5 4.500 6.500-4.500" fill="none" stroke="#0a7cff" strokeWidth="3" strokeLinejoin="round" strokeLinecap="round" />
      </svg>
    </div>
  );
}
